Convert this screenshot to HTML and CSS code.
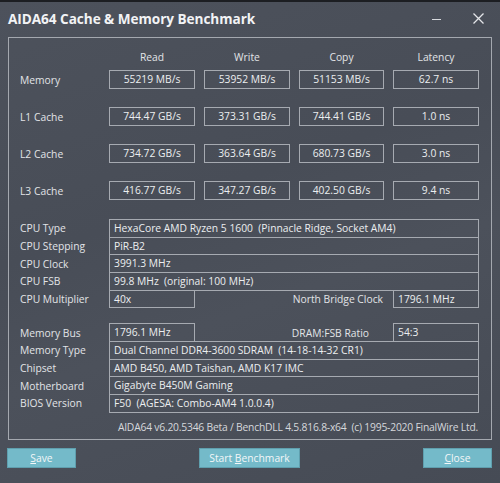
FILE: index.html
```html
<!DOCTYPE html>
<html>
<head>
<meta charset="utf-8">
<link rel="stylesheet" href="styles.css">
</head>
<body>
<div class="window">
  <div class="titlebar">
    <div class="title">AIDA64 Cache &amp; Memory Benchmark</div>
    <div class="controls">
      <span class="min"></span>
      <svg class="close-x" width="11" height="11" viewBox="0 0 11 11"><path d="M0.5 0.5 L10.5 10.5 M10.5 0.5 L0.5 10.5" stroke="#e4e6e9" stroke-width="1.3" fill="none"/></svg>
    </div>
  </div>
  <div class="panel">
    <div class="bench">
      <div class="brow head">
        <span></span><span class="h">Read</span><span class="h">Write</span><span class="h">Copy</span><span class="h">Latency</span>
      </div>
      <div class="brow">
        <span class="lbl">Memory</span><span class="box c">55219 MB/s</span><span class="box c">53952 MB/s</span><span class="box c">51153 MB/s</span><span class="box c">62.7 ns</span>
      </div>
      <div class="brow">
        <span class="lbl">L1 Cache</span><span class="box c">744.47 GB/s</span><span class="box c">373.31 GB/s</span><span class="box c">744.41 GB/s</span><span class="box c">1.0 ns</span>
      </div>
      <div class="brow">
        <span class="lbl">L2 Cache</span><span class="box c">734.72 GB/s</span><span class="box c">363.64 GB/s</span><span class="box c">680.73 GB/s</span><span class="box c">3.0 ns</span>
      </div>
      <div class="brow">
        <span class="lbl">L3 Cache</span><span class="box c">416.77 GB/s</span><span class="box c">347.27 GB/s</span><span class="box c">402.50 GB/s</span><span class="box c">9.4 ns</span>
      </div>
    </div>

    <div class="info cpu">
      <div class="irow"><span class="lbl">CPU Type</span><span class="box wide">HexaCore AMD Ryzen 5 1600&nbsp; (Pinnacle Ridge, Socket AM4)</span></div>
      <div class="irow"><span class="lbl">CPU Stepping</span><span class="box wide">PiR-B2</span></div>
      <div class="irow"><span class="lbl">CPU Clock</span><span class="box wide">3991.3 MHz</span></div>
      <div class="irow"><span class="lbl">CPU FSB</span><span class="box wide">99.8 MHz&nbsp; (original: 100 MHz)</span></div>
      <div class="irow"><span class="lbl">CPU Multiplier</span><span class="box">40x</span><span class="rlbl nb">North Bridge Clock</span><span class="box">1796.1 MHz</span></div>
    </div>

    <div class="info mem">
      <div class="irow"><span class="lbl">Memory Bus</span><span class="box">1796.1 MHz</span><span class="rlbl dr">DRAM:FSB Ratio</span><span class="box">54:3</span></div>
      <div class="irow"><span class="lbl">Memory Type</span><span class="box wide">Dual Channel DDR4-3600 SDRAM&nbsp; (14-18-14-32 CR1)</span></div>
      <div class="irow"><span class="lbl">Chipset</span><span class="box wide">AMD B450, AMD Taishan, AMD K17 IMC</span></div>
      <div class="irow"><span class="lbl">Motherboard</span><span class="box wide">Gigabyte B450M Gaming</span></div>
      <div class="irow"><span class="lbl">BIOS Version</span><span class="box wide">F50&nbsp; (AGESA: Combo-AM4 1.0.0.4)</span></div>
    </div>

    <div class="footer">AIDA64 v6.20.5346 Beta / BenchDLL 4.5.816.8-x64&nbsp; (c) 1995-2020 FinalWire Ltd.</div>
  </div>
  <div class="buttons">
    <button class="btn side"><u>S</u>ave</button>
    <button class="btn mid">Start <u>B</u>enchmark</button>
    <button class="btn side"><u>C</u>lose</button>
  </div>
</div>
</body>
</html>
```

FILE: styles.css
```css
html, body {
  margin: 0;
  padding: 0;
}
body {
  width: 500px;
  height: 483px;
  overflow: hidden;
  background: #1c1e22;
  font-family: "Open Sans", "Noto Sans", sans-serif;
  font-size: 10.3px;
  color: #e4e6e9;
}
.window {
  box-sizing: border-box;
  height: 481px;
  margin-top: 2px;
  background: linear-gradient(160deg, #4d525c 0%, #484d57 40%, #4c515b 60%, #464b55 100%);
  display: flex;
  flex-direction: column;
}
.titlebar {
  height: 35px;
  display: flex;
  align-items: center;
  justify-content: space-between;
  padding: 0 8px 0 8px;
}
.title {
  font-weight: 700;
  font-size: 13.6px;
  color: #f2f3f5;
  letter-spacing: -0.05px;
  margin-top: -2px;
}
.controls {
  display: flex;
  align-items: center;
  gap: 32px;
  margin-right: 8px;
  margin-top: -3px;
}
.min {
  width: 9px;
  height: 1px;
  background: #d8dade;
  margin-top: 2px;
}
.panel {
  box-sizing: border-box;
  height: 403px;
  margin: 0 8px;
  border: 1px solid #a4a8af;
  padding: 9px 12px 0 11px;
  display: flex;
  flex-direction: column;
}
.bench {
  display: flex;
  flex-direction: column;
  gap: 18px;
}
.brow, .irow {
  display: grid;
  grid-template-columns: 80px 86px 86px 85px 86px;
  column-gap: 9px;
  align-items: center;
}
.brow {
  height: 19px;
}
.brow.head {
  margin-bottom: -14px;
}
.h {
  text-align: center;
  color: #e2e4e7;
}
.lbl {
  color: #e2e4e7;
  white-space: nowrap;
}
.box {
  box-sizing: border-box;
  height: 19px;
  border: 1px solid #a6aab1;
  line-height: 17px;
  padding: 0 4px;
  white-space: nowrap;
  color: #eceef0;
}
.box.c {
  text-align: center;
}
.box.wide {
  grid-column: 2 / 6;
}
.info {
  display: flex;
  flex-direction: column;
}
.cpu {
  margin-top: 19px;
}
.mem {
  margin-top: 16px;
}
.irow {
  height: 18.67px;
  margin-bottom: -1px;
}
.irow .box {
  height: 18.67px;
  line-height: 16.67px;
}
.rlbl {
  grid-column: 3 / 5;
  text-align: right;
  white-space: nowrap;
  color: #e2e4e7;
}
.rlbl.nb { padding-right: 1px; }
.rlbl.dr { padding-right: 15px; }
.footer {
  margin-top: 6px;
  text-align: right;
  color: #d6d8dc;
  padding-right: 1px;
  height: 18px;
  line-height: 18px;
  letter-spacing: -0.2px;
}
.buttons {
  display: flex;
  justify-content: space-between;
  padding: 0 8px 0 7px;
  margin-top: 8px;
}
.btn {
  box-sizing: border-box;
  height: 20px;
  border: 1px solid #5f9fae;
  background: #74bac9;
  color: #f3f7f8;
  font-family: inherit;
  font-size: 10.3px;
  padding: 0;
}
.btn.side {
  width: 69px;
}
.btn.mid {
  width: 101px;
}
.btn u {
  text-decoration: underline;
  text-underline-offset: 1px;
}
```
